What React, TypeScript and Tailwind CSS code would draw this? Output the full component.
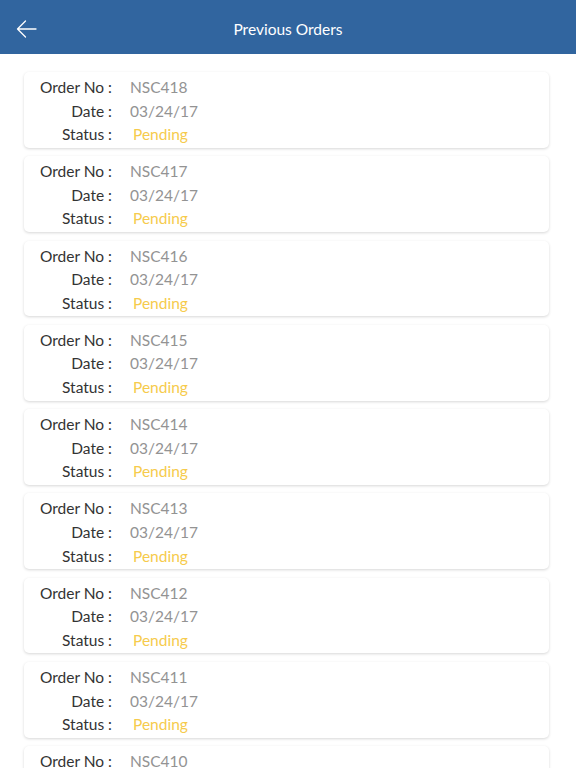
import React from 'react';

const orders = ['NSC418', 'NSC417', 'NSC416', 'NSC415', 'NSC414', 'NSC413', 'NSC412', 'NSC411', 'NSC410'];

const font = { fontFamily: 'Lato, "Open Sans", "Liberation Sans", sans-serif' };

export default function App() {
  return (
    <div className="flex h-[768px] w-[576px] flex-col overflow-hidden bg-white" style={font}>
      {/* header */}
      <div className="relative flex h-[54px] shrink-0 items-center justify-center bg-[#31659f] pt-[5px]">
        <svg
          className="absolute left-[16px] top-[20px]"
          width="21"
          height="18"
          viewBox="0 0 21 18"
          fill="none"
          stroke="#ffffff"
          strokeWidth="1.3"
          strokeLinecap="round"
          strokeLinejoin="round"
        >
          <path d="M20 9H1.5M9.5 1L1.5 9L9.5 17" />
        </svg>
        <span className="text-[15.5px] text-white">Previous Orders</span>
      </div>

      {/* list */}
      <div className="flex flex-col gap-[8.5px] pl-[24px] pr-[27px] pt-[18px]">
        {orders.map((no) => (
          <div
            key={no}
            className="shrink-0 rounded-[5px] bg-white pt-[4px] pb-[1px] shadow-[0_1px_3px_rgba(0,0,0,0.16)]"
          >
            <div className="grid grid-cols-[88px_1fr] gap-x-[18px] text-[15.5px] leading-[23.6px]">
              <span className="text-right text-[#333333]">Order No :</span>
              <span className="text-[#939393]">{no}</span>
              <span className="text-right text-[#333333]">Date :</span>
              <span className="text-[#939393]">03/24/17</span>
              <span className="text-right text-[#333333]">Status :</span>
              <span className="pl-[3px] text-[#f6cb4c]">Pending</span>
            </div>
          </div>
        ))}
      </div>
    </div>
  );
}
